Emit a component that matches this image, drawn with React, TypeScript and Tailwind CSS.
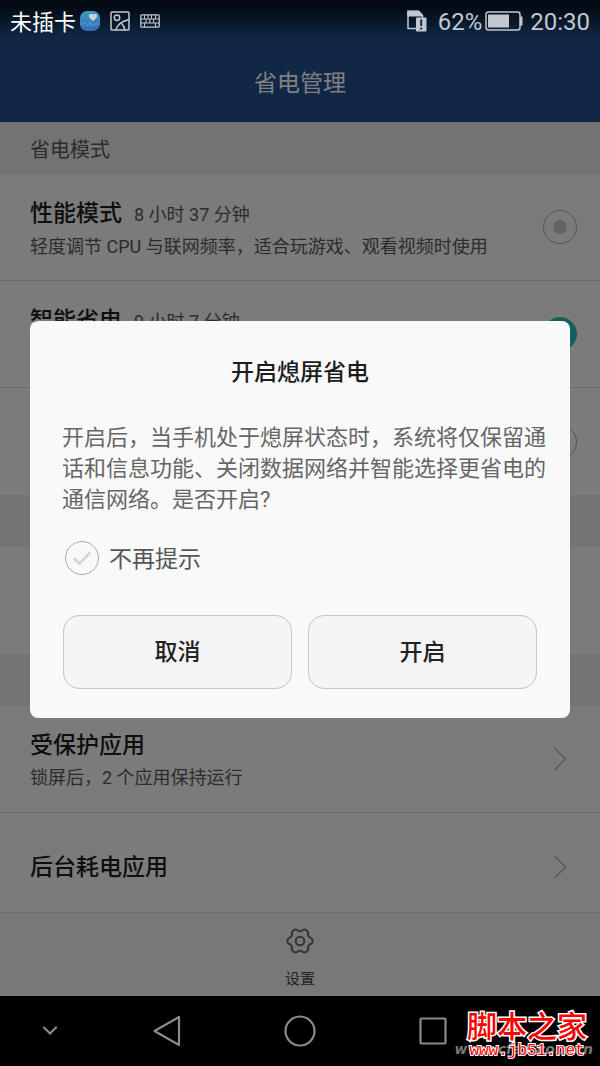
import type { ReactNode } from "react";

type ModeRowProps = {
  id: string;
  title?: string;
  time?: string;
  description?: string;
  checked?: boolean;
  last?: boolean;
};

const ModeRow = ({ id, title, time, description, checked, last }: ModeRowProps) => (
  <div
    className={`flex min-h-[107px] items-center justify-between pl-[30px] pr-[23px] ${
      last ? "" : "border-b border-[#d2d2d2]"
    }`}
  >
    <label htmlFor={id} className="flex flex-col gap-1 pt-[6px]">
      <span className="flex items-baseline gap-3">
        <span className="text-[23px] leading-7 font-medium text-[#1c1c1c]">{title}</span>
        <span className="text-[18px] leading-7 text-[#585858]">{time}</span>
      </span>
      <span className="min-h-7 text-[18px] leading-7 text-[#585858]">{description}</span>
    </label>
    <input
      id={id}
      type="radio"
      name="mode"
      aria-label={title ?? "模式"}
      defaultChecked={checked}
      className="grid size-[34px] shrink-0 appearance-none place-items-center rounded-full border border-[#a8a8a8] before:size-[14px] before:rounded-full before:bg-[#c8c8c8] checked:border-[#20c0c0] checked:bg-[#20c0c0] checked:before:bg-white"
    />
  </div>
);

const SectionBar = ({ children }: { children?: ReactNode }) => (
  <h2 className="flex h-[52px] items-center bg-[#e7e7e7] px-[30px] pt-[3px] text-[20px] leading-7 text-[#585858]">
    {children}
  </h2>
);

const Chevron = () => (
  <svg width="14" height="24" viewBox="0 0 14 24" fill="none" stroke="#b0b0b0" strokeWidth="1.4" className="mr-[10px] shrink-0">
    <path d="M1.5 1l11 11-11 11" />
  </svg>
);

/** System bar along the top edge: carrier, notifications, battery and clock */
const StatusBar = () => (
  <div className="flex h-[42px] items-center justify-between bg-linear-to-b from-[#030910] from-10% to-[#102846] to-90% px-[10px] text-[#c3c8d0]">
    <div className="flex items-center">
      <span className="pt-[3px] text-[22px] leading-7 text-white">未插卡</span>
      <svg width="20" height="20" viewBox="0 0 20 20" className="ml-1">
        <defs>
          <linearGradient id="health" x1="0" y1="0" x2="0" y2="1">
            <stop offset="0" stopColor="#3a9cc4" />
            <stop offset="1" stopColor="#3569b0" />
          </linearGradient>
        </defs>
        <rect width="20" height="20" rx="7" fill="url(#health)" />
        <path d="M13 10C10.500 8 9 6.800 9 5c0-2.500 3-3 4-1.200C14 2 17 2.500 17 5c0 1.800-1.500 3-4 5z" fill="#c5d3d8" />
        <path d="M0 13h4l1.500-1.500 2 4 2.500-5 2 5 2-2.500H20" fill="none" stroke="#6aa6d8" strokeWidth=".7" />
      </svg>
      <svg width="20" height="20" viewBox="0 0 20 20" fill="none" stroke="currentColor" strokeWidth="1.500" className="ml-[10px]">
        <rect x="1" y="1" width="18" height="18" rx="1" />
        <circle cx="7" cy="6.800" r="2.700" />
        <path d="M6 19C7 13.500 11 10.500 19 8.500M11.500 12.500C13.500 14 14.500 16.500 15 19" />
      </svg>
      <svg width="20" height="14" viewBox="0 0 20 14" fill="none" stroke="currentColor" strokeWidth="1.300" className="ml-[10px]">
        <rect x=".8" y=".8" width="18.400" height="12.400" rx="1" />
        <path d="M1 5h18M1 9h18M4.500 1v4M8 1v4M11.500 1v4M15.500 1v4M6 5v4M9.800 5v4M13.600 5v4M4.500 9v4M15.500 9v4" strokeWidth="1.100" />
      </svg>
    </div>
    <div className="flex items-center text-[24px] leading-7">
      <svg width="20" height="22" viewBox="0 0 20 22" className="mr-[11px]">
        <path d="M1 19V1.500h10.500l4 4V8" fill="none" stroke="currentColor" strokeWidth="1.500" />
        <path d="M.3.500h11.500L16 5v1.500H.3z" fill="currentColor" />
        <path d="M1 18.500h8" stroke="currentColor" strokeWidth="1.500" />
        <rect x="9" y="7.500" width="10.500" height="14" rx="1" fill="currentColor" />
        <path d="M14.200 9.500v6.500M14.200 17.500v2" stroke="#102846" strokeWidth="2" />
      </svg>
      <span className="pt-[2px]">62%</span>
      <svg width="38" height="20" viewBox="0 0 38 20" className="ml-[3px]">
        <rect x="1" y="1" width="34" height="18" rx="2.500" fill="none" stroke="currentColor" strokeWidth="1.500" />
        <rect x="3" y="3.500" width="21" height="13" fill="currentColor" />
        <path d="M35 5.500h2.500v9H35z" fill="currentColor" />
      </svg>
      <span className="ml-[7px] pt-[2px]">20:30</span>
    </div>
  </div>
);

const ConfirmDialog = () => (
  <div className="absolute inset-0 grid place-items-center bg-black/50 px-[30px]">
    <div role="dialog" aria-labelledby="dialog-title" className="w-full rounded-lg bg-[#f9f9f9] pt-[38px] pb-[29px]">
      <h2 id="dialog-title" className="text-center text-[23px] leading-7 font-medium text-[#1c1c1c]">
        开启熄屏省电
      </h2>
      <p className="mt-[35px] pr-5 pl-8 text-[22px] leading-[31px] text-[#666]">
        开启后，当手机处于熄屏状态时，系统将仅保留通话和信息功能、关闭数据网络并智能选择更省电的通信网络。是否开启?
      </p>
      <label className="mt-[26px] flex items-center gap-[10px] px-[35px] text-[23px] leading-7 text-[#555]">
        <span className="relative size-[34px]">
          <input type="checkbox" className="block size-[34px] appearance-none rounded-full border border-[#a8a8a8]" />
          <svg viewBox="0 0 34 34" fill="none" stroke="#d2d2d2" strokeWidth="2.500" className="pointer-events-none absolute inset-0">
            <path d="M9 17.500l5.500 5L25 11.500" />
          </svg>
        </span>
        <span className="pt-[5px]">不再提示</span>
      </label>
      <div className="mt-10 flex gap-4 px-[33px]">
        <button className="h-[74px] flex-1 rounded-2xl border border-[#c6c6c6] bg-[#f4f4f4] pt-[3px] text-[23px] font-medium text-[#222]">
          取消
        </button>
        <button className="h-[74px] flex-1 rounded-2xl border border-[#c6c6c6] bg-[#f4f4f4] pt-[3px] text-[23px] font-medium text-[#222]">
          开启
        </button>
      </div>
    </div>
  </div>
);

const NavBar = () => (
  <nav className="relative flex h-[70px] bg-black text-[#8a8a8a]">
    <button aria-label="收起" className="grid w-[100px] place-items-center">
      <svg width="16" height="10" viewBox="0 0 16 10" fill="none" stroke="currentColor" strokeWidth="2.200" strokeLinecap="round">
        <path d="M2 1.500l6 6 6-6" />
      </svg>
    </button>
    <button aria-label="返回" className="grid flex-1 place-items-center">
      <svg width="28" height="32" viewBox="0 0 28 32" fill="none" stroke="currentColor" strokeWidth="2.200" strokeLinejoin="round">
        <path d="M26 2v28L1.500 16z" />
      </svg>
    </button>
    <button aria-label="主屏幕" className="grid flex-1 place-items-center">
      <svg width="32" height="32" viewBox="0 0 32 32" fill="none" stroke="currentColor" strokeWidth="2.200">
        <circle cx="16" cy="16" r="14.500" />
      </svg>
    </button>
    <button aria-label="最近任务" className="grid flex-1 place-items-center">
      <svg width="28" height="28" viewBox="0 0 28 28" fill="none" stroke="currentColor" strokeWidth="2.200">
        <rect x="1.500" y="1.500" width="25" height="25" rx="1" />
      </svg>
    </button>
    <div className="w-[100px]" />
    <div className="absolute right-[7px] bottom-[7px] font-['DejaVu_Sans',sans-serif] text-[14px] leading-5 font-bold text-[#777] italic">
      www.cfan.com.cn
    </div>
    <div className="absolute right-[13px] bottom-[7px] flex flex-col items-center text-[#f00] [paint-order:stroke_fill]">
      <span className="text-[30px] leading-8 font-medium [-webkit-text-stroke:3px_white]">脚本之家</span>
      <span className="font-['Liberation_Mono',monospace] text-[16px] leading-4 [-webkit-text-stroke:2px_white]">
        www.jb51.net
      </span>
    </div>
  </nav>
);

export default function App() {
  return (
    <div className="flex min-h-screen flex-col bg-black font-[Roboto,'Noto_Sans_CJK_SC',sans-serif]">
      <StatusBar />
      <div className="relative flex flex-1 flex-col bg-[#f6f6f6]">
        <h1 className="flex h-20 items-center justify-center bg-[#20508c] pt-[3px] text-[23px] leading-7 text-white">
          省电管理
        </h1>
        <main className="flex-1">
          <SectionBar>省电模式</SectionBar>
          <ModeRow
            id="performance"
            title="性能模式"
            time="8 小时 37 分钟"
            description="轻度调节 CPU 与联网频率，适合玩游戏、观看视频时使用"
          />
          <ModeRow id="smart" title="智能省电" time="9 小时 7 分钟" checked />
          <ModeRow id="third" last />
          <SectionBar />
          <div className="h-[107px]" />
          <SectionBar />
          <a href="#protected" className="flex h-[107px] items-center justify-between border-b border-[#d2d2d2] pr-[23px] pl-[30px]">
            <span className="flex flex-col gap-1 pt-[6px]">
              <span className="text-[23px] leading-7 font-medium text-[#1c1c1c]">受保护应用</span>
              <span className="text-[18px] leading-7 text-[#585858]">锁屏后，2 个应用保持运行</span>
            </span>
            <Chevron />
          </a>
          <a href="#background" className="flex h-[99px] items-center justify-between pt-2 pr-[23px] pl-[30px]">
            <span className="pt-[3px] text-[23px] leading-7 font-medium text-[#1c1c1c]">后台耗电应用</span>
            <Chevron />
          </a>
        </main>
        <footer className="flex h-[84px] justify-center border-t border-[#dadada] bg-[#f0f0f0]">
          <button className="flex flex-col items-center pt-[14px] text-[15px] leading-5 text-[#484848]">
            <svg width="28" height="28" viewBox="0 0 28 28" fill="none" stroke="#686868" strokeWidth="2" strokeLinejoin="round" className="mb-[14px]">
              <path d="M25.100 11.020A3.600 3.600 0 0 1 25.100 16.980A4 4 0 0 0 22.130 22.130A3.600 3.600 0 0 1 16.980 25.100A4 4 0 0 0 11.020 25.100A3.600 3.600 0 0 1 5.870 22.130A4 4 0 0 0 2.900 16.980A3.600 3.600 0 0 1 2.900 11.020A4 4 0 0 0 5.870 5.870A3.600 3.600 0 0 1 11.020 2.900A4 4 0 0 0 16.980 2.900A3.600 3.600 0 0 1 22.130 5.870A4 4 0 0 0 25.100 11.020z" />
              <circle cx="14" cy="14" r="4.300" />
            </svg>
            设置
          </button>
        </footer>
        <ConfirmDialog />
      </div>
      <NavBar />
    </div>
  );
}
